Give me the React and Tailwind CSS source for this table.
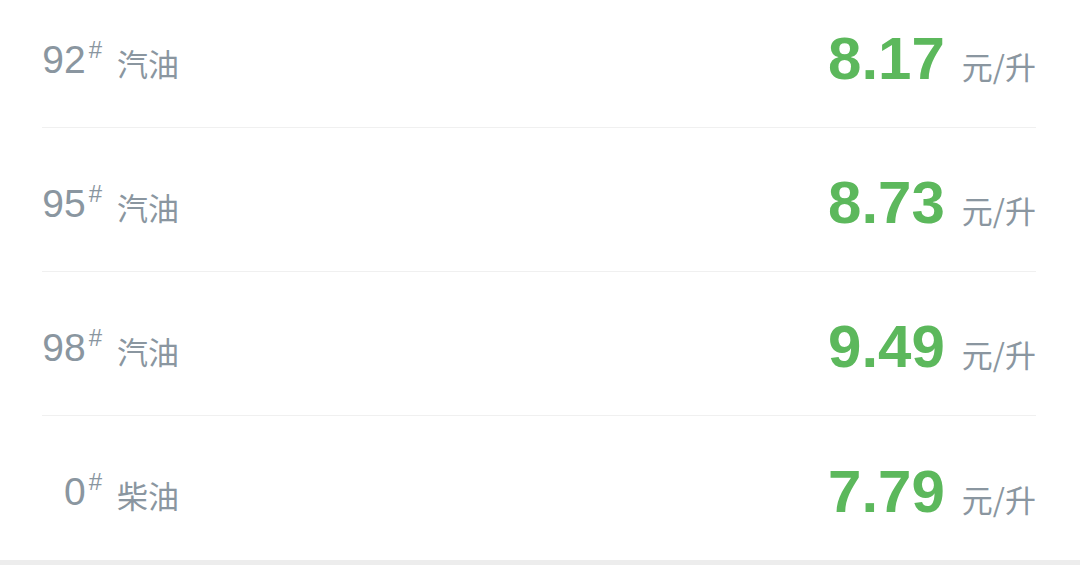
import React from 'react'

const prices = [
	{ grade: '92', name: '汽油', price: '8.17' },
	{ grade: '95', name: '汽油', price: '8.73' },
	{ grade: '98', name: '汽油', price: '9.49' },
	{ grade: '0', name: '柴油', price: '7.79' },
]

export default function App() {
	return (
		<div className="w-[1080px] h-[565px] overflow-hidden bg-white font-['Liberation_Sans','Noto_Sans_CJK_SC',sans-serif]">
			<div className="-mt-4 pl-[42px] pr-[44px]">
				{prices.map((item, i) => (
					<div key={i} className={`h-[144px] pt-[7px] flex items-center justify-between ${i < prices.length - 1 ? 'border-b border-[#f0f0f0]' : ''}`}>
						<div className="flex items-end">
							<div className="w-[60px] flex justify-end items-start text-[#8a96a0]">
								<span className="text-[39px] leading-none">{item.grade}</span>
								<span className="text-[24px] leading-none -mt-[2px] ml-[3px]">#</span>
							</div>
							<span className="ml-[15px] mb-[1px] text-[31px] leading-none text-[#8a96a0] font-['Noto_Sans_CJK_SC',sans-serif]">{item.name}</span>
						</div>
						<div className="flex items-baseline">
							<span className="text-[60px] font-bold leading-none text-[#5cb85c]">{item.price}</span>
							<span className="ml-[17px] text-[31px] leading-none text-[#8a96a0] font-['Noto_Sans_CJK_SC',sans-serif]">元/升</span>
						</div>
					</div>
				))}
			</div>
			<div className="h-[10px] bg-[#ededed]" />
		</div>
	)
}
